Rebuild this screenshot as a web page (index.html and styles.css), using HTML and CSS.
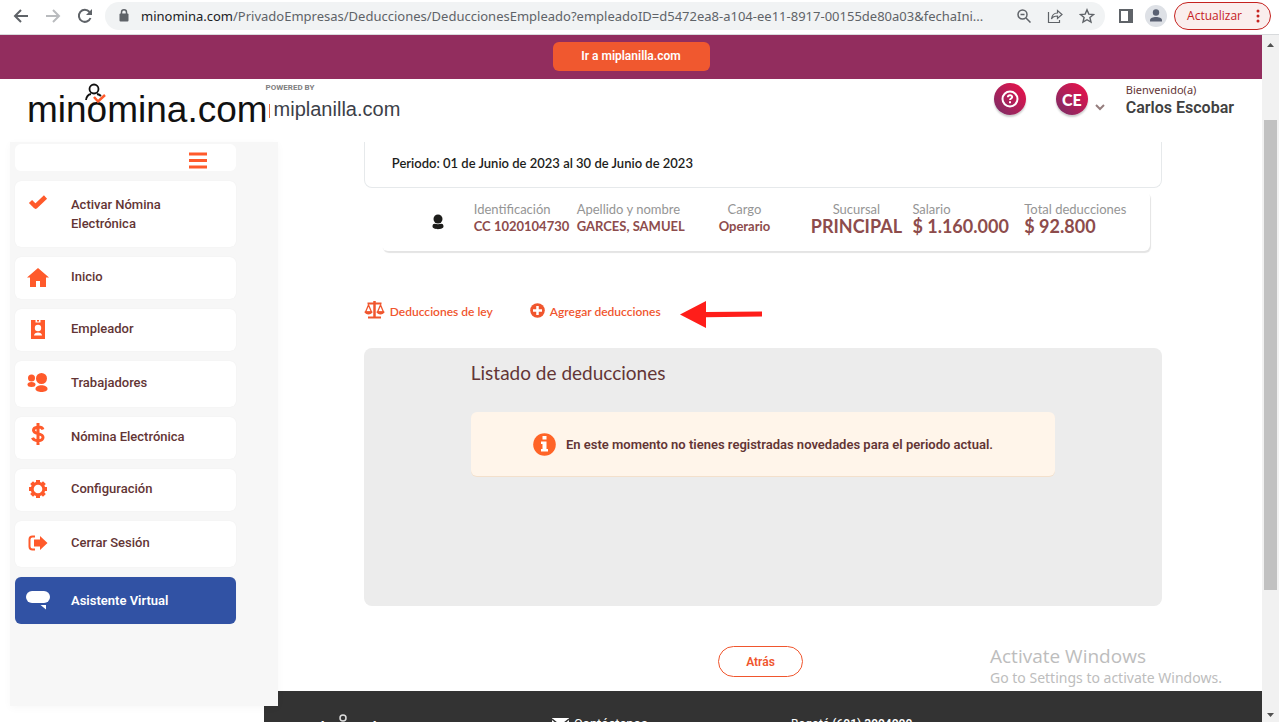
FILE: index.html
```html
<!DOCTYPE html>
<html lang="es">
<head>
    <meta charset="UTF-8">
    <meta name="viewport" content="width=device-width, initial-scale=1.0">
    <title>minomina.com</title>
    <link rel="stylesheet" href="styles.css">
</head>
<body>
    <div class="browser-bar">
        <div class="nav-buttons">
            <button type="button" aria-label="Atrás"><svg width="16" height="16" viewBox="0 0 16 16"><path d="M15 8H2M8 2L2 8l6 6" fill="none" stroke="#5f6368" stroke-width="2"/></svg></button>
            <button type="button" aria-label="Adelante"><svg width="16" height="16" viewBox="0 0 16 16"><path d="M1 8h13M8 2l6 6-6 6" fill="none" stroke="#b9bbbe" stroke-width="2"/></svg></button>
            <button type="button" aria-label="Recargar"><svg width="16" height="16" viewBox="0 0 16 16"><path d="M13.5 10A6 6 0 1 1 12.5 4" fill="none" stroke="#5f6368" stroke-width="2"/><path d="M15 1v6H9z" fill="#5f6368"/></svg></button>
        </div>
        <div class="address">
            <svg class="lock" width="10" height="13" viewBox="0 0 10 13"><path d="M2.5 5V3.300a2.500 2.500 0 0 1 5 0V5" fill="none" stroke="#5f6368" stroke-width="1.500"/><rect x="0.500" y="4.500" width="9" height="8" rx="1" fill="#5f6368"/></svg>
            <label for="url">minomina.com</label>
            <input type="text" id="url" value="/PrivadoEmpresas/Deducciones/DeduccionesEmpleado?empleadoID=d5472ea8-a104-ee11-8917-00155de80a03&amp;fechaIni...">
            <button type="button" aria-label="Zoom"><svg width="14" height="14" viewBox="0 0 14 14" fill="none" stroke="#5f6368" stroke-width="1.500"><circle cx="5.500" cy="5.500" r="4.500"/><path d="M9 9l4.500 4.500M3.500 5.500h4"/></svg></button>
            <button type="button" aria-label="Compartir"><svg width="16" height="16" viewBox="0 0 16 16" fill="none" stroke="#5f6368" stroke-width="1.200"><path d="M1.500 4v10.500h11V12"/><path d="M4.500 11c.5-4 3-6 6-6V2.500L15 6.500l-4.500 4V8c-3 0-5 1-6 3z"/></svg></button>
            <button type="button" aria-label="Favoritos"><svg width="16" height="16" viewBox="0 0 16 16"><path d="M8 1.800l1.800 4.300 4.700.4-3.600 3 1.100 4.600L8 11.700l-4 2.400 1.100-4.600-3.600-3 4.700-.4z" fill="none" stroke="#5f6368" stroke-width="1.400"/></svg></button>
        </div>
        <button type="button" aria-label="Panel lateral"><svg width="14" height="14" viewBox="0 0 14 14"><path d="M1 1h12v12H1z" fill="none" stroke="#5f6368" stroke-width="2"/><path d="M9 1h4v12H9z" fill="#5f6368"/></svg></button>
        <button type="button" aria-label="Perfil"><svg width="22" height="22" viewBox="0 0 22 22"><circle cx="11" cy="11" r="11" fill="#dee1e6"/><circle cx="11" cy="7.500" r="3.200" fill="#5a6172"/><path d="M5 16.500v-1.300c0-2 3-3.200 6-3.200s6 1.200 6 3.200v1.300z" fill="#5a6172"/></svg></button>
        <button type="button" class="update">Actualizar <svg width="4" height="14" viewBox="0 0 4 14" fill="#c5221f"><circle cx="2" cy="2" r="1.500"/><circle cx="2" cy="7" r="1.500"/><circle cx="2" cy="12" r="1.500"/></svg></button>
    </div>

    <div class="viewport">
        <div class="page">
            <div class="banner"><a class="banner-link" href="#">Ir a miplanilla.com</a></div>

            <header class="header">
                <a class="logo" href="#">
                    <span class="logo-name">minomina.com
                        <svg class="logo-person" width="24" height="22" viewBox="0 0 24 22" fill="none"><circle cx="11" cy="6" r="4.500" stroke="#111" stroke-width="1.800"/><path d="M3 17c.5-4 2.500-5.500 5-6M14 11c2 .4 3 1 4 2" stroke="#111" stroke-width="1.800"/><path d="M11 14l4 4.500 7-6.500" stroke="#ff5a2b" stroke-width="2.500"/></svg>
                    </span>
                    <span class="logo-side">
                        <small>POWERED BY</small>
                        <span class="logo-by">miplanilla.com</span>
                    </span>
                </a>
                <button type="button" class="circle" aria-label="Ayuda"><svg width="18" height="18" viewBox="0 0 18 18" fill="none" stroke="#fff"><circle cx="9" cy="9" r="7.500" stroke-width="2"/><path d="M6.800 7.300C6.900 4.500 11.300 4.600 11.200 7c0 1.500-2.200 1.500-2.200 3" stroke-width="1.900"/><path d="M9 11.300v2" stroke-width="2"/></svg></button>
                <button type="button" class="circle user">CE</button>
                <svg class="caret" width="10" height="7" viewBox="0 0 10 7"><path d="M1 1l4 4 4-4" fill="none" stroke="#957d7d" stroke-width="2"/></svg>
                <div class="welcome">
                    <span>Bienvenido(a)</span>
                    <strong>Carlos Escobar</strong>
                </div>
            </header>

            <div class="layout">
                <nav class="sidebar">
                    <button type="button" class="toggle" aria-label="Menú"><svg width="18" height="17" viewBox="0 0 18 17"><path d="M0 2h18M0 8.500h18M0 15h18" stroke="#ff5a2b" stroke-width="3"/></svg></button>
                    <a class="item tall" href="#"><svg width="24" height="24" viewBox="0 0 24 24"><path d="M4.500 11.500l5 5L19.500 7" fill="none" stroke="#ff5a2b" stroke-width="4.500" stroke-linejoin="round"/></svg><span>Activar Nómina Electrónica</span></a>
                    <a class="item" href="#"><svg width="24" height="24" viewBox="0 0 24 24" fill="#ff5a2b"><path d="M12 3L1 12.500h3V22h6v-6h4v6h6v-9.500h3z"/></svg><span>Inicio</span></a>
                    <a class="item" href="#"><svg width="24" height="24" viewBox="0 0 24 24"><path d="M5 3h14v19H5z" fill="#ff5a2b"/><g fill="#fff"><path d="M9.500 3h5v2.500h-5z"/><circle cx="12" cy="11" r="3.200"/><path d="M8 18.500c0-4 8-4 8 0z"/></g><path d="M11 3h2v1.500h-2z" fill="#ff5a2b"/></svg><span>Empleador</span></a>
                    <a class="item medium" href="#"><svg width="24" height="24" viewBox="0 0 24 24" fill="#ff5a2b"><circle cx="5.500" cy="7" r="3.500"/><circle cx="15.500" cy="7.500" r="5.500"/><ellipse cx="5.500" cy="13.500" rx="4" ry="2.500"/><path d="M9.500 18c0-5 12-5 12 0 0 4-12 4-12 0z"/></svg><span>Trabajadores</span></a>
                    <a class="item" href="#"><svg class="raised" width="24" height="24" viewBox="0 0 24 24"><path d="M17 7.500C15.500 4 7.500 4.500 7.500 8.200c0 4.500 9.500 2.300 9.500 7 0 4.500-9 4.500-10.500.6M12 1v22" fill="none" stroke="#ff5a2b" stroke-width="3"/></svg><span>Nómina Electrónica</span></a>
                    <a class="item" href="#"><svg width="24" height="24" viewBox="0 0 24 24" fill="none" stroke="#ff5a2b"><circle cx="12" cy="12" r="5.800" stroke-width="3"/><path d="M12 3v3M12 18v3M3 12h3M18 12h3M5.600 5.600l2 2M16.400 16.400l2 2M5.600 18.400l2-2M16.400 7.600l2-2" stroke-width="4"/></svg><span>Configuración</span></a>
                    <a class="item medium" href="#"><svg width="24" height="24" viewBox="0 0 24 24"><path d="M9 5.500H6.500c-2 0-3 1-3 3v7c0 2 1 3 3 3H9" fill="none" stroke="#ff5a2b" stroke-width="2"/><path d="M8 8.500h6V5l7.500 7-7.500 7v-3.500H8z" fill="#ff5a2b"/></svg><span>Cerrar Sesión</span></a>
                    <a class="item assistant" href="#"><svg width="26" height="24" viewBox="0 0 26 24" fill="#fff"><rect x="1" y="2" width="24" height="12" rx="6"/><path d="M15.500 16H21v4.500z"/></svg><span>Asistente Virtual</span></a>
                </nav>

                <div class="column">
                    <main class="content">
                        <div class="period">Periodo: 01 de Junio de 2023 al 30 de Junio de 2023</div>
                        <div class="employee">
                            <svg width="12" height="16" viewBox="0 0 12 16" fill="#1d1d1b"><circle cx="6" cy="5" r="4.500"/><path d="M.5 12.500C.5 8.800 3 9.600 6 10.200c3-.6 5.500-1.400 5.500 2.300 0 3.500-11 3.500-11 0z"/></svg>
                            <dl><dt>Identificación</dt><dd>CC 1020104730</dd></dl>
                            <dl><dt>Apellido y nombre</dt><dd>GARCES, SAMUEL</dd></dl>
                            <dl class="centered"><dt>Cargo</dt><dd>Operario</dd></dl>
                            <dl class="centered large"><dt>Sucursal</dt><dd>PRINCIPAL</dd></dl>
                            <dl class="large"><dt>Salario</dt><dd>$ 1.160.000</dd></dl>
                            <dl class="large"><dt>Total deducciones</dt><dd>$ 92.800</dd></dl>
                        </div>

                        <div class="actions">
                            <a href="#"><svg width="21" height="18" viewBox="0 0 21 18" fill="none" stroke="#f0562e"><path d="M3.500 2.500h14M4 16.500h13" stroke-width="2"/><path d="M10.500 0v17" stroke-width="2.500"/><path d="M4.500 4L1.500 11h6zM16.500 4l-3 7h6z" stroke-width="1.300"/><path d="M.5 10.500h8c-.5 4-7.500 4-8 0zM12.500 10.500h8c-.5 4-7.500 4-8 0z" fill="#f0562e" stroke="none"/></svg>Deducciones de ley</a>
                            <a href="#"><svg width="15" height="15" viewBox="0 0 15 15"><circle cx="7.500" cy="7.500" r="7.300" fill="#f0562e"/><path d="M7.500 3v9M3 7.500h9" stroke="#fff" stroke-width="2.500"/></svg>Agregar deducciones</a>
                            <svg class="arrow" width="82" height="27" viewBox="0 0 82 27"><path d="M0 13.500L26 0v11l56-.5v5l-56 .8V27z" fill="#ff1e1a"/></svg>
                        </div>

                        <section class="list">
                            <h2>Listado de deducciones</h2>
                            <div class="notice">
                                <svg width="23" height="23" viewBox="0 0 23 23"><circle cx="11.500" cy="11.500" r="11.300" fill="#ff6427"/><path d="M9.500 3h4v3.500h-4zM8 8.500h5.500V16H15v2.500H8V16h1.500v-5H8z" fill="#fff"/></svg>
                                <span>En este momento no tienes registradas novedades para el periodo actual.</span>
                            </div>
                        </section>
                        <button type="button" class="back">Atrás</button>
                    </main>

                    <footer class="footer">
                        <span class="footer-logo">minomina.com
                            <svg class="footer-person" width="10" height="10" viewBox="0 0 10 10"><circle cx="5" cy="4" r="3" fill="none" stroke="#ddd" stroke-width="1.500"/></svg>
                        </span>
                        <a class="footer-contact" href="#"><svg width="17" height="13" viewBox="0 0 17 13"><path d="M0 0h17v13H0z" fill="#fff"/><path d="M0 1l8.500 7L17 1" fill="none" stroke="#333" stroke-width="1.500"/></svg>Contáctenos</a>
                        <span class="footer-phone">Bogotá <b>(601) 3904000</b></span>
                    </footer>
                </div>
            </div>

            <div class="watermark">
                <span>Activate Windows</span>
                <small>Go to Settings to activate Windows.</small>
            </div>
        </div>

        <div class="scrollbar">
            <svg width="9" height="5" viewBox="0 0 9 5"><path d="M1 5l3.500-4L8 5z" fill="#505050"/></svg>
            <div class="track"><div class="thumb"></div></div>
            <svg width="9" height="5" viewBox="0 0 9 5"><path d="M1 0l3.500 4L8 0z" fill="#505050"/></svg>
        </div>
    </div>
</body>
</html>
```
FILE: styles.css
```css
* {
    box-sizing: border-box;
}
body {
    margin: 0;
    height: 100vh;
    display: flex;
    flex-direction: column;
    overflow: hidden;
    background: #fff;
    font-family: Roboto, sans-serif;
    font-size: 13px;
    color: #633535;
}
a {
    color: inherit;
    text-decoration: none;
}
button {
    padding: 0;
    border: 0;
    background: none;
    font: inherit;
    color: inherit;
}
svg {
    display: block;
    flex-shrink: 0;
}

/* browser bar */
.browser-bar {
    height: 35px;
    padding: 0 8px 3px 13px;
    display: flex;
    align-items: center;
    gap: 12px;
    border-bottom: 1px solid #d8dadc;
    font-family: "Open Sans", sans-serif;
}
.nav-buttons {
    display: flex;
    gap: 16px;
}
.address {
    flex: 1;
    min-width: 0;
    height: 28px;
    padding: 0 10px 0 14px;
    margin-right: 2px;
    display: flex;
    align-items: center;
    gap: 16px;
    border-radius: 14px;
    background: #f1f3f4;
    font-family: Roboto, sans-serif;
    font-size: 14px;
}
.address label {
    margin-left: -4px;
    color: #202124;
}
.address input {
    flex: 1;
    min-width: 0;
    margin: 0 -4px 0 -16px;
    padding: 0;
    border: 0;
    background: none;
    font: inherit;
    color: #5f6368;
}
.address label,
.address input {
    font-family: "Noto Sans", sans-serif;
    font-size: 13px;
}
.update {
    height: 28px;
    padding: 0 10px 0 12px;
    margin-left: -5px;
    display: flex;
    align-items: center;
    gap: 14px;
    border: 1px solid #c5221f;
    border-radius: 14px;
    background: #faeeed;
    color: #c5221f;
    font-size: 12px;
}

.viewport {
    flex: 1;
    min-height: 0;
    display: flex;
}
.page {
    flex: 1;
    min-width: 0;
    position: relative;
    display: flex;
    flex-direction: column;
    overflow: hidden;
}
.scrollbar {
    width: 17px;
    padding: 7px 0 4px;
    display: flex;
    flex-direction: column;
    align-items: center;
    background: #f1f1f1;
}
.track {
    flex: 1;
    width: 13px;
    padding: 73px 0 123px;
}
.thumb {
    height: 100%;
    background: #c1c1c1;
}

/* header */
.banner {
    height: 44px;
    padding-bottom: 2px;
    display: flex;
    align-items: center;
    justify-content: center;
    background: #922d5e;
}
.banner-link {
    width: 157px;
    line-height: 29px;
    border-radius: 6px;
    background: #f0582f;
    color: #fff;
    font-size: 12px;
    font-weight: 600;
    text-align: center;
}
.header {
    height: 63px;
    padding: 0 28px 0 27px;
    display: flex;
    align-items: flex-start;
}
.logo {
    margin-right: auto;
    display: flex;
    font-family: "Liberation Sans", sans-serif;
    color: #111;
}
.logo-name {
    position: relative;
    padding-top: 10px;
    font-size: 37px;
    line-height: 42px;
}
.logo-person {
    position: absolute;
    left: 56px;
    top: 4px;
}
.logo-side {
    margin-left: -2px;
    padding-top: 3px;
    display: flex;
    flex-direction: column;
}
.logo-side small {
    font-family: Roboto, sans-serif;
    font-size: 8px;
    line-height: 12px;
    font-weight: 700;
    color: #808080;
}
.logo-by {
    padding-left: 8px;
    font-size: 20px;
    line-height: 30px;
    color: #3c4048;
    background: linear-gradient(#f0703a, #f0703a) 3px 10px / 1px 14px no-repeat;
}
.circle {
    width: 32px;
    height: 32px;
    margin-top: 4px;
    display: flex;
    align-items: center;
    justify-content: center;
    border-radius: 50%;
    background: linear-gradient(45deg, #742f68, #f20f48);
    box-shadow: 0 2px 2px #ccc;
    color: #fff;
}
.user {
    margin-left: 30px;
    font-family: Lato, sans-serif;
    font-size: 16px;
    font-weight: 900;
}
.caret {
    margin: 25px 0 0 7px;
}
.welcome {
    margin: 2px 0 0 21px;
    display: flex;
    flex-direction: column;
    font-family: "Noto Sans", sans-serif;
    font-size: 11px;
    line-height: 18px;
}
.welcome strong {
    font-family: Roboto, sans-serif;
    font-size: 16px;
    font-weight: 600;
    color: #414141;
}

/* sidebar */
.layout {
    flex: 1;
    min-height: 0;
    display: flex;
}
.sidebar {
    width: 268px;
    margin: 0 0 16px 10px;
    padding: 2px 42px 0 5px;
    position: relative;
    z-index: 1;
    display: flex;
    flex-direction: column;
    gap: 10px;
    background: #f7f7f7;
    box-shadow: 0 2px 8px rgba(0, 0, 0, 0.03);
}
.toggle {
    height: 27px;
    padding: 5px 29px 0;
    display: flex;
    align-items: center;
    justify-content: flex-end;
    border-radius: 6px;
    background: #fff;
}
.item {
    height: 42px;
    padding: 0 0 3px 10px;
    display: flex;
    align-items: center;
    gap: 20px;
    border-radius: 6px;
    background: #fff;
    box-shadow: 0 0 1px #e8e8e8;
    font-weight: 500;
    line-height: 19px;
}
.item svg {
    width: 26px;
}
.item span {
    max-width: 130px;
}
.tall {
    height: 66px;
    padding-bottom: 0;
}
.tall svg {
    margin-bottom: 24px;
}
.tall span {
    max-width: 110px;
}
.medium {
    height: 46px;
}
.raised {
    margin-bottom: 6px;
}
.assistant {
    height: 47px;
    padding-bottom: 0;
    background: #3152a4;
    color: #fff;
    font-weight: 600;
}

/* main column */
.column {
    flex: 1;
    min-width: 0;
    margin-left: -14px;
    display: flex;
    flex-direction: column;
}
.content {
    flex: 1;
    min-height: 0;
    width: 80%;
    margin: 0 auto;
    display: flex;
    flex-direction: column;
    font-family: Lato, sans-serif;
}
.period {
    height: 46px;
    padding: 12px 27px 0;
    border: 1px solid #e6e9eb;
    border-top: 0;
    border-radius: 0 0 8px 8px;
    color: #1d1d1b;
    font-weight: 600;
    line-height: 18px;
}
.employee {
    height: 60px;
    margin: 3px 12px 0 18px;
    padding-top: 10px;
    display: grid;
    grid-template-columns: 92fr 103fr 112fr 112fr 112fr 112fr 126fr;
    border-radius: 6px;
    box-shadow: 1px 2px 1px #e4e4e4;
    white-space: nowrap;
}
.employee svg {
    margin: 13px auto 0 50px;
}
.employee dl {
    margin: 0;
    line-height: 17px;
}
.employee dt {
    color: #959595;
}
.employee dd {
    margin: 0;
    color: #8d4c4c;
    font-weight: 700;
}
.large dd {
    font-size: 18px;
}
.centered {
    display: flex;
    flex-direction: column;
    align-items: center;
}
.actions {
    margin-top: 50px;
    height: 27px;
    display: flex;
    align-items: flex-start;
    gap: 37px;
    color: #f0562e;
    font-size: 12px;
    font-weight: 600;
}
.actions a {
    display: flex;
    align-items: center;
    gap: 5px;
    line-height: 22px;
}
.actions a svg {
    margin-bottom: 4px;
}
.actions .arrow {
    margin-left: -18px;
}
.list {
    height: 258px;
    margin-top: 20px;
    padding: 12px 107px;
    border-radius: 8px;
    background: #ececec;
}
.list h2 {
    margin: 0;
    font-size: 19px;
    font-weight: 400;
    line-height: 26px;
}
.notice {
    height: 64px;
    margin-top: 26px;
    display: flex;
    align-items: center;
    justify-content: center;
    gap: 10px;
    border-radius: 6px;
    background: #fff5ea;
    box-shadow: 0 1px 0 #f3e0cc;
    font-family: Roboto, sans-serif;
    font-weight: 600;
}
.back {
    width: 85px;
    height: 31px;
    margin: 40px 0 0;
    margin-left: calc(50% - 45px);
    border: 1px solid #f0562e;
    border-radius: 16px;
    color: #f0562e;
    font-family: Roboto, sans-serif;
    font-size: 12px;
    font-weight: 600;
}
.footer {
    height: 31px;
    padding: 25px 0 0 36px;
    display: grid;
    grid-template-columns: 252fr 239fr 471fr;
    overflow: hidden;
    background: #333;
    color: #fff;
    font-size: 13px;
    line-height: 16px;
}
.footer-logo {
    position: relative;
    font-family: "Liberation Sans", sans-serif;
    font-size: 24px;
    line-height: 28px;
}
.footer-person {
    position: absolute;
    left: 38px;
    top: -2px;
}
.footer-contact {
    display: flex;
    gap: 5px;
}
.footer-contact svg {
    margin-top: 2px;
}
.footer-phone {
    font-size: 12px;
}
.footer-phone b {
    font-weight: 600;
}
.watermark {
    position: absolute;
    left: 990px;
    bottom: 33px;
    display: flex;
    flex-direction: column;
    color: #bdbdbd;
    font-family: "Open Sans", sans-serif;
    font-size: 19px;
    line-height: 22px;
}
.watermark small {
    font-family: "Noto Sans", sans-serif;
    font-size: 14px;
}
```
